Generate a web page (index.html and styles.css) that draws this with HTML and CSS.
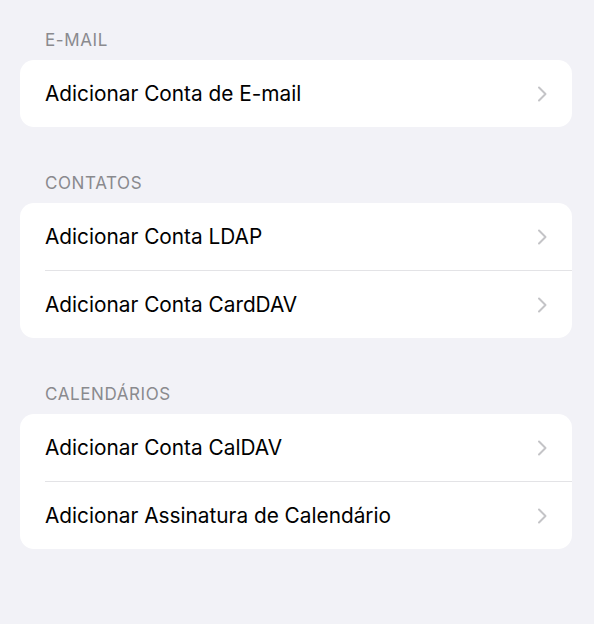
FILE: index.html
```html
<!DOCTYPE html>
<html lang="pt-BR">
<head>
    <meta charset="UTF-8">
    <meta name="viewport" content="width=device-width, initial-scale=1.0">
    <title>Contas</title>
    <link rel="stylesheet" href="styles.css">
</head>
<body>
    <div class="settings">

        <!-- E-mail -->
        <div class="section">
            <div class="section-title">E-MAIL</div>
            <div class="card">
                <div class="row">
                    <span class="row-label">Adicionar Conta de E-mail</span>
                    <svg class="chevron" width="10" height="16" viewBox="0 0 10 16"><path d="M2 1.5 L8.5 8 L2 14.5" /></svg>
                </div>
            </div>
        </div>

        <!-- Contatos -->
        <div class="section">
            <div class="section-title">CONTATOS</div>
            <div class="card">
                <div class="row">
                    <span class="row-label">Adicionar Conta LDAP</span>
                    <svg class="chevron" width="10" height="16" viewBox="0 0 10 16"><path d="M2 1.5 L8.5 8 L2 14.5" /></svg>
                </div>
                <div class="row">
                    <span class="row-label">Adicionar Conta CardDAV</span>
                    <svg class="chevron" width="10" height="16" viewBox="0 0 10 16"><path d="M2 1.5 L8.5 8 L2 14.5" /></svg>
                </div>
            </div>
        </div>

        <!-- Calendarios -->
        <div class="section">
            <div class="section-title">CALENDÁRIOS</div>
            <div class="card">
                <div class="row">
                    <span class="row-label">Adicionar Conta CalDAV</span>
                    <svg class="chevron" width="10" height="16" viewBox="0 0 10 16"><path d="M2 1.5 L8.5 8 L2 14.5" /></svg>
                </div>
                <div class="row">
                    <span class="row-label">Adicionar Assinatura de Calendário</span>
                    <svg class="chevron" width="10" height="16" viewBox="0 0 10 16"><path d="M2 1.5 L8.5 8 L2 14.5" /></svg>
                </div>
            </div>
        </div>

    </div>
</body>
</html>
```

FILE: styles.css
```css
body {
    margin: 0;
    background-color: #f2f2f7;
    font-family: Inter, "Liberation Sans", sans-serif;
    color: #000;
}

.settings {
    padding: 30px 22px 0 20px;
}

.section {
    margin-bottom: 46px;
}

.section-title {
    font-size: 17px;
    line-height: 20px;
    letter-spacing: 0.6px;
    color: #8a8a8e;
    padding: 0 25px 10px 25px;
}

.card {
    background-color: #fff;
    border-radius: 14px;
    overflow: hidden;
}

.row {
    display: flex;
    align-items: center;
    justify-content: space-between;
    height: 67px;
    margin-left: 25px;
    padding-right: 25px;
    border-top: 1px solid #e3e3e6;
}

.row:first-child {
    border-top: none;
}

.row-label {
    font-size: 20.8px;
}

.chevron {
    fill: none;
    stroke: #c4c4c7;
    stroke-width: 2;
    stroke-linecap: round;
    stroke-linejoin: round;
}
```
